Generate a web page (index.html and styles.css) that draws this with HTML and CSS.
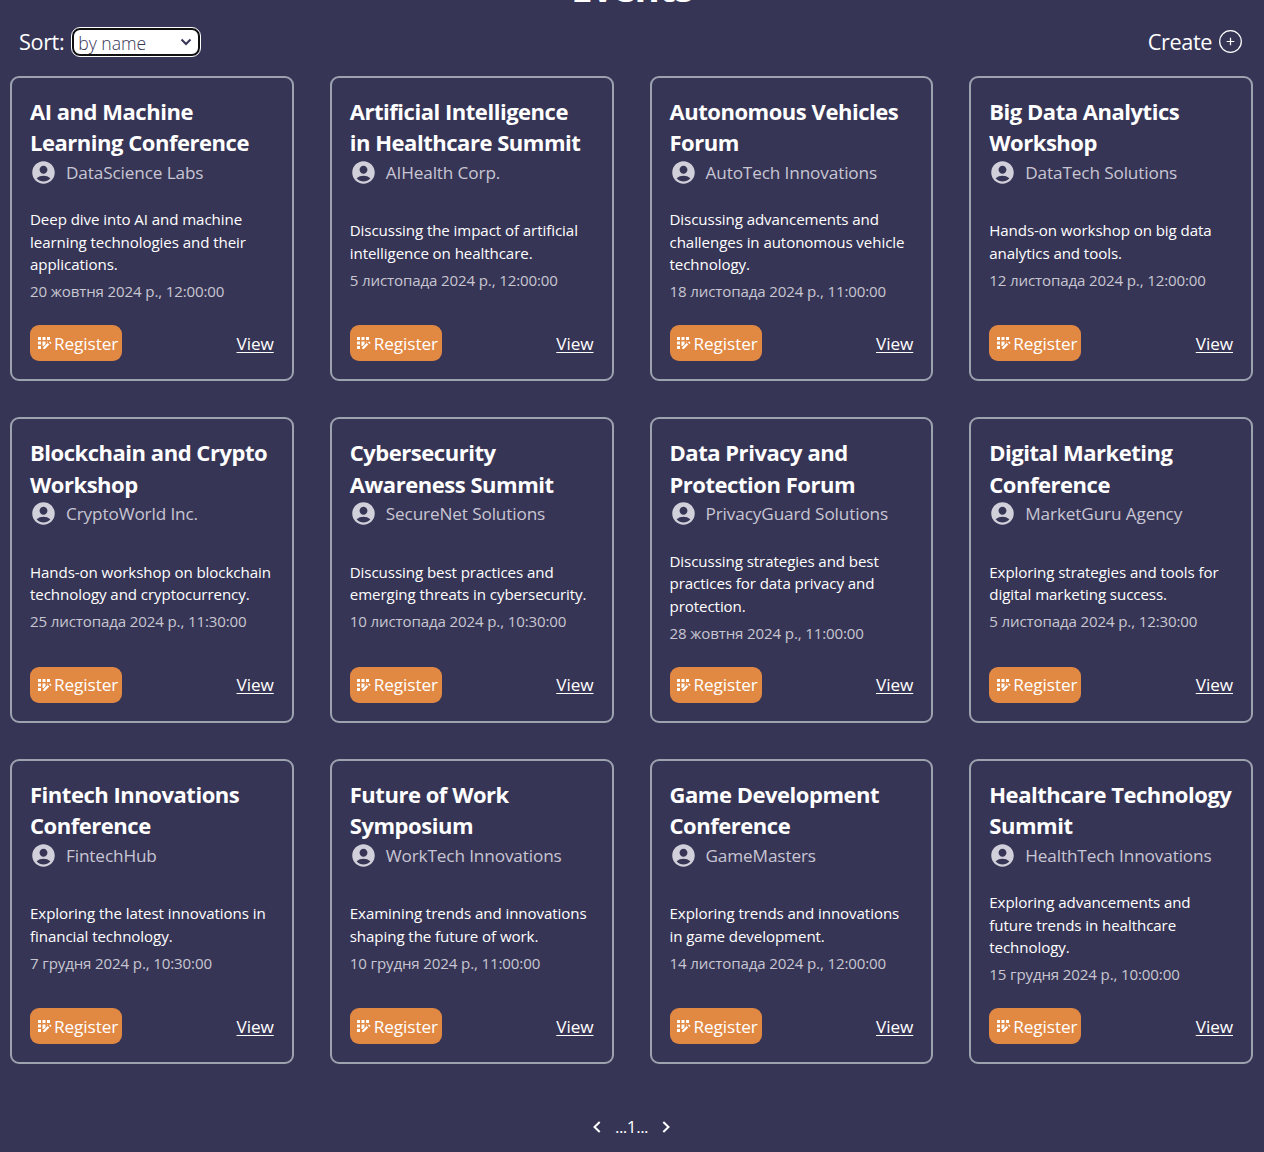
FILE: index.html
```html
<!DOCTYPE html>
<html lang="en">
<head>
<meta charset="utf-8">
<title>Events</title>
<link rel="stylesheet" href="styles.css">
</head>
<body>
<svg class="sprite" aria-hidden="true">
  <symbol id="user" viewBox="0 0 24 24"><path d="M12 2C6.48 2 2 6.48 2 12s4.48 10 10 10 10-4.480 10-10S17.520 2 12 2zm0 4c1.930 0 3.500 1.570 3.500 3.500S13.930 13 12 13s-3.500-1.570-3.500-3.500S10.070 6 12 6zm0 14c-2.030 0-4.430-.820-6.140-2.880a9.950 9.950 0 0 1 12.280 0C16.430 19.180 14.030 20 12 20z"/></symbol>
  <symbol id="register" viewBox="0 0 24 24"><path d="M10 4h4v4h-4zM4 16h4v4H4zM4 10h4v4H4zM4 4h4v4H4zM16 4h4v4h-4zM10 16h1.500l2.500-2.500V10h-4zM17.500 10H16v1.500zM11 17.860V20h2.100l5.980-5.970-2.120-2.120zM21.850 11.560l-1.410-1.410a.5.5 0 0 0-.71 0l-1.060 1.060 2.120 2.120 1.060-1.060c.2-.2.2-.51 0-.71z"/></symbol>
</svg>
<h1 class="heading">Events</h1>
<div class="toolbar">
  <div class="sort"><span>Sort:</span>
    <div class="select" tabindex="0"><span>by name</span><svg class="caret" viewBox="0 0 12 8"><path d="M1.500 1.500 6 6l4.500-4.500"/></svg></div>
  </div>
  <a class="create"><span>Create</span><svg viewBox="0 0 24 24"><circle cx="12" cy="12" r="11.300"/><path d="M12 8v8M8 12h8"/></svg></a>
</div>
<main class="grid">
  <article class="card">
    <header><h2>AI and Machine<br>Learning Conference</h2><p class="org"><svg><use href="#user"/></svg><span>DataScience Labs</span></p></header>
    <div class="info"><p class="desc">Deep dive into AI and machine<br>learning technologies and their<br>applications.</p><p class="date">20 жовтня 2024 р., 12:00:00</p></div>
    <footer><a class="btn"><svg><use href="#register"/></svg><span>Register</span></a><a class="view">View</a></footer>
  </article>
  <article class="card">
    <header><h2>Artificial Intelligence<br>in Healthcare Summit</h2><p class="org"><svg><use href="#user"/></svg><span>AIHealth Corp.</span></p></header>
    <div class="info"><p class="desc">Discussing the impact of artificial<br>intelligence on healthcare.</p><p class="date">5 листопада 2024 р., 12:00:00</p></div>
    <footer><a class="btn"><svg><use href="#register"/></svg><span>Register</span></a><a class="view">View</a></footer>
  </article>
  <article class="card">
    <header><h2>Autonomous Vehicles<br>Forum</h2><p class="org"><svg><use href="#user"/></svg><span>AutoTech Innovations</span></p></header>
    <div class="info"><p class="desc">Discussing advancements and<br>challenges in autonomous vehicle<br>technology.</p><p class="date">18 листопада 2024 р., 11:00:00</p></div>
    <footer><a class="btn"><svg><use href="#register"/></svg><span>Register</span></a><a class="view">View</a></footer>
  </article>
  <article class="card">
    <header><h2>Big Data Analytics<br>Workshop</h2><p class="org"><svg><use href="#user"/></svg><span>DataTech Solutions</span></p></header>
    <div class="info"><p class="desc">Hands-on workshop on big data<br>analytics and tools.</p><p class="date">12 листопада 2024 р., 12:00:00</p></div>
    <footer><a class="btn"><svg><use href="#register"/></svg><span>Register</span></a><a class="view">View</a></footer>
  </article>
  <article class="card">
    <header><h2>Blockchain and Crypto<br>Workshop</h2><p class="org"><svg><use href="#user"/></svg><span>CryptoWorld Inc.</span></p></header>
    <div class="info"><p class="desc">Hands-on workshop on blockchain<br>technology and cryptocurrency.</p><p class="date">25 листопада 2024 р., 11:30:00</p></div>
    <footer><a class="btn"><svg><use href="#register"/></svg><span>Register</span></a><a class="view">View</a></footer>
  </article>
  <article class="card">
    <header><h2>Cybersecurity<br>Awareness Summit</h2><p class="org"><svg><use href="#user"/></svg><span>SecureNet Solutions</span></p></header>
    <div class="info"><p class="desc">Discussing best practices and<br>emerging threats in cybersecurity.</p><p class="date">10 листопада 2024 р., 10:30:00</p></div>
    <footer><a class="btn"><svg><use href="#register"/></svg><span>Register</span></a><a class="view">View</a></footer>
  </article>
  <article class="card">
    <header><h2>Data Privacy and<br>Protection Forum</h2><p class="org"><svg><use href="#user"/></svg><span>PrivacyGuard Solutions</span></p></header>
    <div class="info"><p class="desc">Discussing strategies and best<br>practices for data privacy and<br>protection.</p><p class="date">28 жовтня 2024 р., 11:00:00</p></div>
    <footer><a class="btn"><svg><use href="#register"/></svg><span>Register</span></a><a class="view">View</a></footer>
  </article>
  <article class="card">
    <header><h2>Digital Marketing<br>Conference</h2><p class="org"><svg><use href="#user"/></svg><span>MarketGuru Agency</span></p></header>
    <div class="info"><p class="desc">Exploring strategies and tools for<br>digital marketing success.</p><p class="date">5 листопада 2024 р., 12:30:00</p></div>
    <footer><a class="btn"><svg><use href="#register"/></svg><span>Register</span></a><a class="view">View</a></footer>
  </article>
  <article class="card">
    <header><h2>Fintech Innovations<br>Conference</h2><p class="org"><svg><use href="#user"/></svg><span>FintechHub</span></p></header>
    <div class="info"><p class="desc">Exploring the latest innovations in<br>financial technology.</p><p class="date">7 грудня 2024 р., 10:30:00</p></div>
    <footer><a class="btn"><svg><use href="#register"/></svg><span>Register</span></a><a class="view">View</a></footer>
  </article>
  <article class="card">
    <header><h2>Future of Work<br>Symposium</h2><p class="org"><svg><use href="#user"/></svg><span>WorkTech Innovations</span></p></header>
    <div class="info"><p class="desc">Examining trends and innovations<br>shaping the future of work.</p><p class="date">10 грудня 2024 р., 11:00:00</p></div>
    <footer><a class="btn"><svg><use href="#register"/></svg><span>Register</span></a><a class="view">View</a></footer>
  </article>
  <article class="card">
    <header><h2>Game Development<br>Conference</h2><p class="org"><svg><use href="#user"/></svg><span>GameMasters</span></p></header>
    <div class="info"><p class="desc">Exploring trends and innovations<br>in game development.</p><p class="date">14 листопада 2024 р., 12:00:00</p></div>
    <footer><a class="btn"><svg><use href="#register"/></svg><span>Register</span></a><a class="view">View</a></footer>
  </article>
  <article class="card">
    <header><h2>Healthcare Technology<br>Summit</h2><p class="org"><svg><use href="#user"/></svg><span>HealthTech Innovations</span></p></header>
    <div class="info"><p class="desc">Exploring advancements and<br>future trends in healthcare<br>technology.</p><p class="date">15 грудня 2024 р., 10:00:00</p></div>
    <footer><a class="btn"><svg><use href="#register"/></svg><span>Register</span></a><a class="view">View</a></footer>
  </article>
</main>
<nav class="pager">
  <svg viewBox="0 0 8 12"><path d="M6.700 1 1.500 6l5.200 5"/></svg>
  <span>...1...</span>
  <svg viewBox="0 0 8 12"><path d="M1.300 1l5.200 5-5.200 5"/></svg>
</nav>
</body>
</html>
```
FILE: styles.css
```css
* { box-sizing: border-box; margin: 0; padding: 0; }
html { font-size: 18px; }
body {
  height: 1152px;
  overflow: hidden;
  background: #373556;
  color: #fff;
  font-family: "Segoe UI", "Open Sans", "Noto Sans", sans-serif;
  line-height: 1.5;
  white-space: nowrap;
}
.sprite { display: none; }
.heading {
  height: 48px;
  margin-top: -36px;
  text-align: center;
  font-size: 38.5px;
  line-height: 47px;
  font-weight: 700;
  letter-spacing: -0.9px;
}
.toolbar {
  display: flex;
  justify-content: space-between;
  align-items: center;
  height: 60px;
  padding: 0 22px 0 19px;
  font-size: 21.7px;
  letter-spacing: -0.4px;
}
.sort, .create { display: flex; align-items: center; }
.sort { gap: 8px; }
.create { gap: 7px; }
.create svg { width: 23px; height: 23px; fill: none; stroke: #fff; stroke-width: 1.3; }
.select {
  display: flex;
  align-items: center;
  justify-content: space-between;
  width: 128px;
  height: 28px;
  padding: 0 6px 0 4px;
  border: 2px solid #101010;
  border-radius: 8px;
  outline: 1px solid #fff;
  background: #fff;
  color: #373556;
  font-size: 17.6px;
  font-weight: 300;
  letter-spacing: 0;
}
.select span { padding-top: 2px; }
.caret { width: 12px; height: 8px; fill: none; stroke: #373556; stroke-width: 2; }
.grid {
  display: grid;
  grid-template-columns: repeat(4, 1fr);
  grid-auto-rows: 305.5px;
  gap: 36px;
  margin-top: 3.7px;
  padding: 0 11px 0 10px;
}
.card {
  display: flex;
  flex-direction: column;
  justify-content: space-between;
  padding: 18px;
  border: 2px solid #9ca3af;
  border-radius: 9px;
}
.card h2 { font-size: 22px; line-height: 31.5px; font-weight: 700; letter-spacing: -0.47px; }
.org {
  display: flex;
  align-items: center;
  gap: 9px;
  height: 27px;
  color: #c8c6d3;
  font-size: 17.2px;
  letter-spacing: -0.13px;
}
.org span { padding-top: 0.6px; }
.org svg { width: 27px; height: 27px; fill: #d1cfda; }
.desc { font-size: 15.1px; line-height: 22.5px; letter-spacing: -0.08px; }
.date { margin-top: 4.5px; font-size: 15.1px; line-height: 22.5px; letter-spacing: -0.14px; color: #c8c7d1; }
.card footer { display: flex; justify-content: space-between; align-items: center; font-size: 17.2px; letter-spacing: -0.08px; }
.btn {
  display: flex;
  align-items: center;
  width: 92px;
  height: 36px;
  padding-left: 4.5px;
  gap: 1.5px;
  border-radius: 9px;
  background: #e18843;
}
.btn svg { width: 18px; height: 18px; fill: #fff; }
.btn span, .view { padding-top: 0.6px; }
.view { text-decoration: underline; text-underline-offset: 2px; }
.pager {
  display: flex;
  justify-content: center;
  align-items: center;
  gap: 14px;
  height: 27px;
  margin-top: 49.3px;
  padding-right: 1px;
  font-size: 17.1px;
  letter-spacing: -0.5px;
}
.pager svg { width: 8px; height: 12px; fill: none; stroke: #fff; stroke-width: 2; }
```
